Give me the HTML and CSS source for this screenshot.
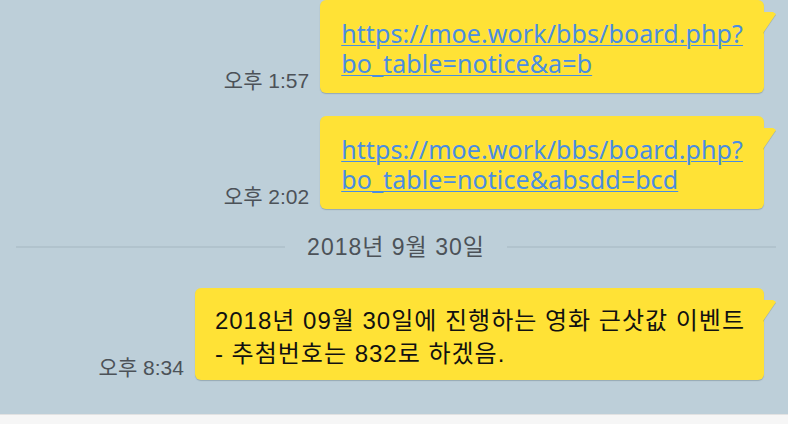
FILE: index.html
```html
<!DOCTYPE html>
<html lang="ko">
<head>
<meta charset="utf-8">
<title>Chat</title>
<link rel="stylesheet" href="styles.css">
</head>
<body>
<div class="chat">
  <div class="msg first">
    <span class="time">오후 1:57</span>
    <div class="bubble link-bubble">
      <a href="#" class="link">https://moe.work/bbs/board.php?<br>bo_table=notice&amp;a=b</a>
    </div>
  </div>
  <div class="msg second">
    <span class="time">오후 2:02</span>
    <div class="bubble link-bubble">
      <a href="#" class="link">https://moe.work/bbs/board.php?<br>bo_table=notice&amp;absdd=bcd</a>
    </div>
  </div>
  <div class="date-sep">
    <span class="rule"></span>
    <span class="date-text">2018년 9월 30일</span>
    <span class="rule"></span>
  </div>
  <div class="msg third">
    <span class="time">오후 8:34</span>
    <div class="bubble text-bubble">2018년 09월 30일에 진행하는 영화 근삿값 이벤트<br>- 추첨번호는 832로 하겠음.</div>
  </div>
</div>
<div class="footer"></div>
</body>
</html>
```
FILE: styles.css
```css
html, body {
  margin: 0;
  padding: 0;
}
body {
  width: 788px;
  height: 424px;
  overflow: hidden;
  background: #f6f6f6;
  font-family: "Liberation Sans", "Noto Sans CJK KR", sans-serif;
}
.chat {
  height: 414px;
  background: #bdcfd9;
  padding: 0 24px 0 16px;
  box-sizing: border-box;
  display: flex;
  flex-direction: column;
}
.msg {
  display: flex;
  justify-content: flex-end;
  align-items: flex-end;
  gap: 11px;
}
.second { margin-top: 23px; }
.third { margin-top: 26px; }
.time {
  font-family: "Liberation Sans", "Noto Sans CJK KR", sans-serif;
  font-size: 21px;
  line-height: 20px;
  color: #4c5258;
  margin-bottom: 2px;
  white-space: nowrap;
}
.bubble {
  position: relative;
  background: #ffe236;
  border-radius: 6px;
  box-shadow: 0 1px 1px rgba(80, 100, 110, 0.35);
  white-space: nowrap;
}
.bubble::after {
  content: "";
  position: absolute;
  top: 12px;
  right: -12px;
  width: 13px;
  height: 21px;
  background: #ffe236;
  clip-path: polygon(0 0, 10px 0, 13px 2px, 0 100%);
}
.bubble::before {
  content: "";
  position: absolute;
  top: 13px;
  right: -12px;
  width: 13px;
  height: 21px;
  background: rgba(80, 100, 110, 0.3);
  clip-path: polygon(0 0, 10px 0, 13px 2px, 0 100%);
}
.link-bubble {
  padding: 18px 21px 15px 21px;
  height: 60px;
}
.link {
  font-family: "Noto Sans", sans-serif;
  font-size: 25px;
  line-height: 30px;
  letter-spacing: 0.1px;
  color: #4a8de2;
  text-decoration: underline;
  text-decoration-thickness: 1px;
  text-underline-offset: 2px;
}
.text-bubble {
  padding: 16px 19px 10px 20px;
  height: 66px;
  font-family: "Liberation Sans", "Noto Sans CJK KR", sans-serif;
  font-size: 24px;
  line-height: 33px;
  letter-spacing: 1px;
  color: #111;
}
.date-sep {
  margin-top: 23px;
  margin-right: -12px;
  height: 30px;
  display: flex;
  align-items: center;
  gap: 22px;
}
.rule {
  flex: 1;
  height: 2px;
  background: #b1c3cd;
}
.date-text {
  font-family: "Liberation Sans", "Noto Sans CJK KR", sans-serif;
  font-size: 23px;
  line-height: 30px;
  letter-spacing: 1px;
  color: #4c5258;
  white-space: nowrap;
}
.footer {
  height: 9px;
  border-top: 1px solid #e2e2e2;
  background: #f6f6f6;
}
```
